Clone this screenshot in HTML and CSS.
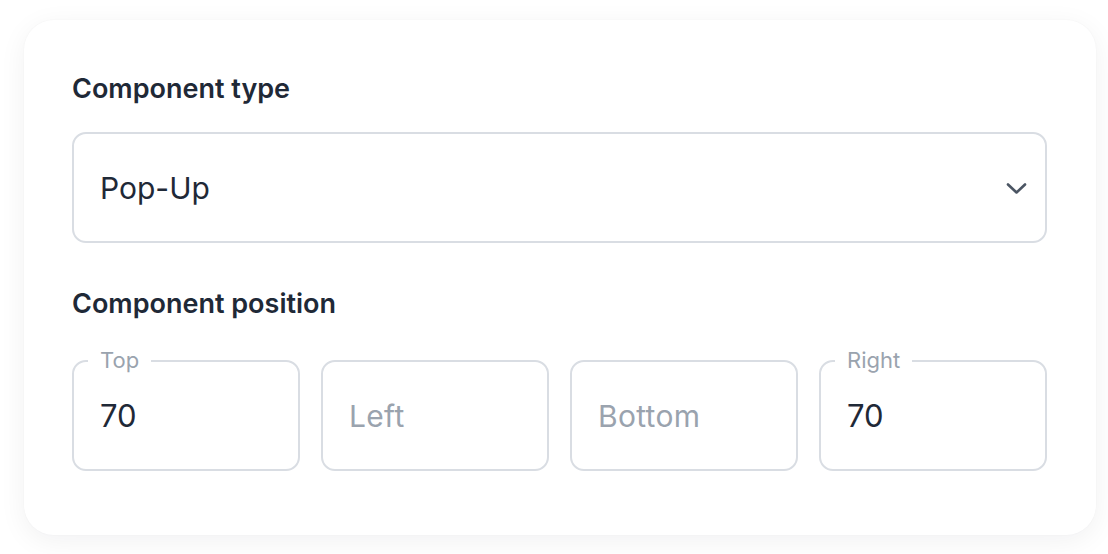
FILE: index.html
```html
<!DOCTYPE html>
<html>
<head>
<meta charset="utf-8">
<link rel="stylesheet" href="styles.css">
</head>
<body>
<div class="page">
  <div class="card">
    <div class="field">
      <div class="label">Component type</div>
      <div class="select">
        <span class="select-value">Pop-Up</span>
        <svg class="chevron" width="21" height="12" viewBox="0 0 21 12"><path d="M2 1.5l8.5 8 8.5-8" fill="none" stroke="#4b5563" stroke-width="2.6" stroke-linecap="round" stroke-linejoin="round"/></svg>
      </div>
    </div>
    <div class="field">
      <div class="label label-pos">Component position</div>
      <div class="inputs">
        <div class="box"><span class="float">Top</span><span class="value">70</span></div>
        <div class="box"><span class="placeholder">Left</span></div>
        <div class="box"><span class="placeholder">Bottom</span></div>
        <div class="box"><span class="float">Right</span><span class="value">70</span></div>
      </div>
    </div>
  </div>
</div>
</body>
</html>
```
FILE: styles.css
```css
* { box-sizing: border-box; }
html, body { margin: 0; padding: 0; }
body {
  background: #ffffff;
  font-family: Inter, "Noto Sans", sans-serif;
  width: 1108px;
  height: 554px;
  overflow: hidden;
}
.page {
  padding: 20px 12px 0 24px;
}
.card {
  width: 1072px;
  height: 515px;
  background: #ffffff;
  border-radius: 30px;
  box-shadow: 0 6px 28px rgba(17, 24, 39, 0.06), 0 0 2px rgba(17, 24, 39, 0.04);
  padding: 54px 49px 0 48px;
  display: flex;
  flex-direction: column;
  gap: 46px;
}
.field {
  display: flex;
  flex-direction: column;
}
.label {
  font-size: 27px;
  font-weight: 600;
  color: #1f2937;
  line-height: 30px;
  margin-bottom: 28px;
}
.label-pos { margin-bottom: 41px; }
.select {
  height: 111px;
  border: 2px solid #d9dde3;
  border-radius: 14px;
  display: flex;
  align-items: center;
  justify-content: space-between;
  padding: 0 18px 0 26px;
}
.select-value {
  font-size: 30px;
  color: #1f2937;
}
.chevron { margin-top: 2px; }
.inputs {
  display: grid;
  grid-template-columns: repeat(4, 1fr);
  gap: 21px;
}
.box {
  position: relative;
  height: 111px;
  border: 2px solid #d9dde3;
  border-radius: 14px;
  display: flex;
  align-items: center;
  padding: 0 26px;
}
.value {
  font-size: 31px;
  color: #1f2937;
}
.placeholder {
  font-size: 30px;
  color: #9aa3ae;
  letter-spacing: 0.3px;
}
.float {
  position: absolute;
  top: -16px;
  left: 14px;
  padding: 0 12px;
  background: #ffffff;
  font-size: 22px;
  line-height: 28px;
  color: #9aa3ae;
}
```
